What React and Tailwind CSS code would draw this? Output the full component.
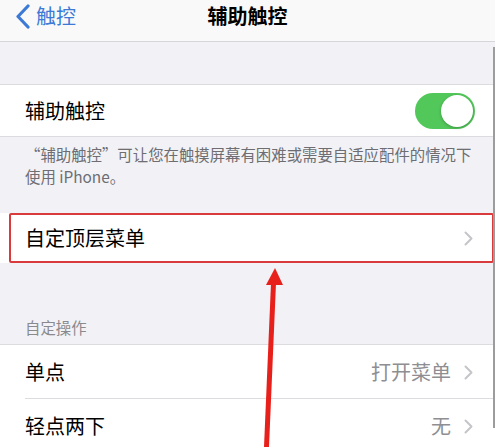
import React from 'react';

const FONT = { fontFamily: '"Noto Sans CJK SC", "Noto Sans", "Liberation Sans", sans-serif' };

function Chevron() {
  return (
    <svg width="9" height="15" viewBox="0 0 9 15" className="shrink-0">
      <path d="M1.5 1.5 L7.5 7.5 L1.5 13.5" fill="none" stroke="#c5c5c9" strokeWidth="2" strokeLinecap="round" strokeLinejoin="round" />
    </svg>
  );
}

function Row({ label, value, last }) {
  return (
    <div className="relative h-[54px] bg-white flex items-center pl-[25px] pr-[22px]">
      <span className="text-[20px] text-black flex-1">{label}</span>
      {value && <span className="text-[20px] text-[#8e8e93] mr-[13px]">{value}</span>}
      <Chevron />
      {!last && <div className="absolute left-[25px] right-0 bottom-0 h-px bg-[#dcdce0]" />}
    </div>
  );
}

export default function App() {
  return (
    <div className="relative w-[495px] h-[447px] overflow-hidden bg-[#f2f2f6]" style={FONT}>
      {/* nav bar */}
      <div className="h-[42px] bg-[#f9f9f9] border-b border-[#d6d6da] grid grid-cols-[1fr_auto_1fr] items-center pb-[9px]">
        <div className="flex items-center pl-[15px] text-[#3d7ad6]">
          <svg width="16" height="25" viewBox="0 0 16 25">
            <path d="M13 2 L3 12.5 L13 23" fill="none" stroke="#3d7ad6" strokeWidth="3.2" strokeLinecap="round" strokeLinejoin="round" />
          </svg>
          <span className="ml-[5px] text-[20px] leading-none">触控</span>
        </div>
        <div className="text-[20px] font-semibold text-black leading-none">辅助触控</div>
        <div />
      </div>

      <div className="h-[42px]" />

      {/* toggle row */}
      <div className="h-[53px] bg-white border-y border-[#dcdce0] flex items-center pl-[25px] pr-[20px]">
        <span className="text-[20px] text-black flex-1">辅助触控</span>
        <div className="w-[60px] h-[36px] rounded-full bg-[#52c75a] flex items-center justify-end pr-[2px]">
          <div className="w-[32px] h-[32px] rounded-full bg-white shadow-[0_1px_3px_rgba(0,0,0,0.25)]" />
        </div>
      </div>

      <div className="px-[25px] pt-[6px] text-[15.4px] leading-[22px] text-[#6d6d72] whitespace-nowrap">
        <p>“辅助触控”可让您在触摸屏幕有困难或需要自适应配件的情况下</p>
        <p>使用 iPhone。</p>
      </div>

      <div className="h-[26px]" />

      {/* highlighted row */}
      <div className="relative h-[50px] bg-white flex items-center pl-[25px] pr-[22px]">
        <span className="text-[20px] text-black flex-1">自定顶层菜单</span>
        <Chevron />
        <div className="absolute left-[9px] right-[1px] top-0 bottom-0 border-2 border-[#d93a3c] rounded-[2px]" />
      </div>

      <div className="px-[25px] pt-[53px] pb-[6px] text-[15.4px] leading-[22px] text-[#8a8a8e] border-b border-[#dcdce0]">
        自定操作
      </div>

      <Row label="单点" value="打开菜单" />
      <Row label="轻点两下" value="无" last />

      {/* scroll indicator */}
      <div className="absolute right-0 top-[47px] w-[2px] h-[381px] bg-[#9c9c9c]" />

      {/* annotation arrow */}
      <svg className="absolute left-0 top-0" width="495" height="447" viewBox="0 0 495 447">
        <polygon points="271,283 276,283 269,447 264,447" fill="#e8201c" />
        <polygon points="275,268 266,285 283,285" fill="#e8201c" />
      </svg>
    </div>
  );
}
